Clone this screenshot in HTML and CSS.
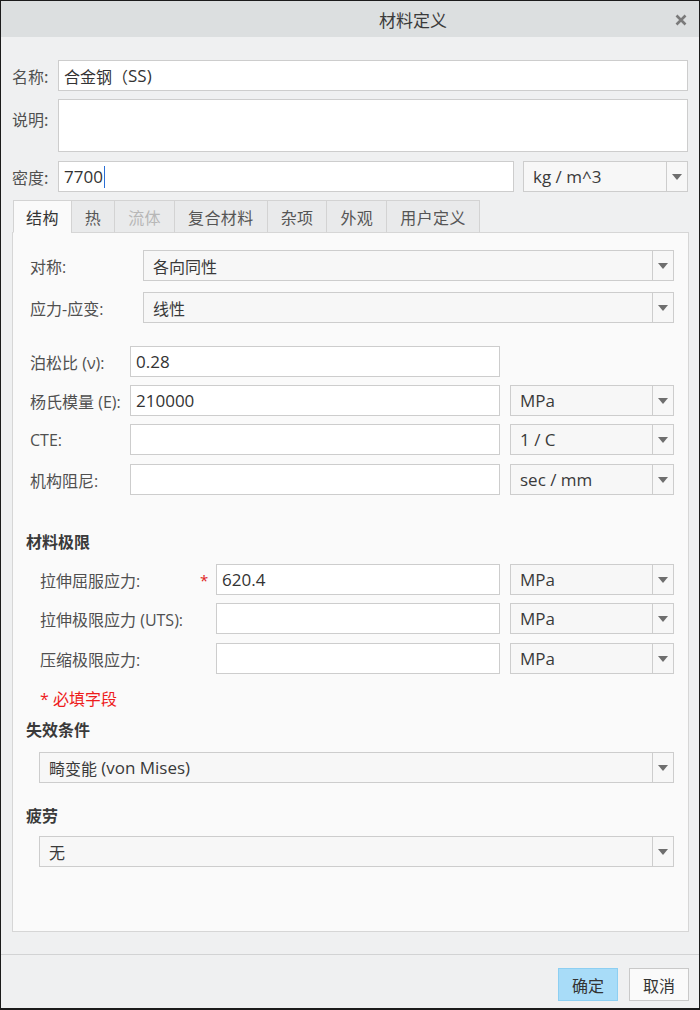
FILE: index.html
```html
<!DOCTYPE html>
<html lang="zh-CN">
<head>
<meta charset="utf-8">
<title>材料定义</title>
<link rel="stylesheet" href="styles.css">
</head>
<body>
<div class="window">
  <div class="titlebar">
    <span class="title">材料定义</span>
    <svg class="close" width="12" height="12" viewBox="0 0 12 12"><path d="M1.5 1.5 L10.5 10.5 M10.5 1.5 L1.5 10.5" stroke="#7a7a7a" stroke-width="2.6" stroke-linecap="butt"/></svg>
  </div>

  <div class="topform">
    <div class="frow r-name">
      <label class="flabel">名称:</label>
      <div class="input grow">合金钢（<span class="lat">SS)</span></div>
    </div>
    <div class="frow r-desc">
      <label class="flabel top">说明:</label>
      <div class="input grow tall"></div>
    </div>
    <div class="frow r-dens">
      <label class="flabel">密度:</label>
      <div class="input grow lat">7700<span class="caret"></span></div>
      <div class="select unit-top lat"><span class="sval">kg / m^3</span><span class="arrow"></span></div>
    </div>
  </div>

  <div class="tabs">
    <div class="tab active">结构</div>
    <div class="tab">热</div>
    <div class="tab disabled">流体</div>
    <div class="tab">复合材料</div>
    <div class="tab">杂项</div>
    <div class="tab">外观</div>
    <div class="tab">用户定义</div>
  </div>

  <div class="panel">
    <div class="prow first">
      <label class="plabel w113">对称:</label>
      <div class="select grow"><span class="sval">各向同性</span><span class="arrow"></span></div>
    </div>
    <div class="prow gap11">
      <label class="plabel w113">应力-应变:</label>
      <div class="select grow"><span class="sval">线性</span><span class="arrow"></span></div>
    </div>

    <div class="prow gap23">
      <label class="plabel w100">泊松比 (ν):</label>
      <div class="input w370 lat">0.28</div>
    </div>
    <div class="prow gap8">
      <label class="plabel w100">杨氏模量 (E):</label>
      <div class="input w370 lat">210000</div>
      <div class="select unit lat"><span class="sval">MPa</span><span class="arrow"></span></div>
    </div>
    <div class="prow gap8">
      <label class="plabel w100">CTE:</label>
      <div class="input w370"></div>
      <div class="select unit lat"><span class="sval">1 / C</span><span class="arrow"></span></div>
    </div>
    <div class="prow gap9">
      <label class="plabel w100">机构阻尼:</label>
      <div class="input w370"></div>
      <div class="select unit lat"><span class="sval">sec / mm</span><span class="arrow"></span></div>
    </div>

    <div class="heading h-limits">材料极限</div>
    <div class="prow lim gap12">
      <label class="plabel w160">拉伸屈服应力:</label>
      <span class="star">*</span>
      <div class="input w284 lat">620.4</div>
      <div class="select unit lat"><span class="sval">MPa</span><span class="arrow"></span></div>
    </div>
    <div class="prow lim gap8">
      <label class="plabel w160">拉伸极限应力 (UTS):</label>
      <span class="star"></span>
      <div class="input w284"></div>
      <div class="select unit lat"><span class="sval">MPa</span><span class="arrow"></span></div>
    </div>
    <div class="prow lim gap9">
      <label class="plabel w160">压缩极限应力:</label>
      <span class="star"></span>
      <div class="input w284"></div>
      <div class="select unit lat"><span class="sval">MPa</span><span class="arrow"></span></div>
    </div>
    <div class="required">* 必填字段</div>

    <div class="heading h-fail">失效条件</div>
    <div class="prow sub gap12">
      <div class="select grow"><span class="sval">畸变能 <span class="lat">(von Mises)</span></span><span class="arrow"></span></div>
    </div>
    <div class="heading h-fat">疲劳</div>
    <div class="prow sub gap10">
      <div class="select grow"><span class="sval">无</span><span class="arrow"></span></div>
    </div>
  </div>

  <div class="footer">
    <button class="btn primary">确定</button>
    <button class="btn">取消</button>
  </div>
</div>
</body>
</html>
```

FILE: styles.css
```css
* { box-sizing: border-box; }

html, body {
  margin: 0;
  padding: 0;
  background: #1b1b1b;
}

body {
  font-family: "Open Sans", "Noto Sans CJK SC", sans-serif;
  font-size: 16px;
  color: #3c3c3c;
}

.lat { font-size: 17px; }

.window {
  width: 700px;
  height: 1010px;
  border: 1px solid #1b1b1b;
  border-bottom-width: 2px;
  background: #eff0f1;
  display: flex;
  flex-direction: column;
}

.titlebar {
  height: 36px;
  background: #dcdfe0;
  display: flex;
  align-items: center;
  position: relative;
}

.title {
  flex: 1;
  text-align: center;
  padding-left: 126px;
  font-size: 17px;
  color: #3a3a3a;
  font-family: "Noto Sans CJK SC", sans-serif;
}

.close {
  position: absolute;
  right: 12px;
  top: 13px;
}

.topform {
  padding: 0 11px;
}

.frow {
  display: flex;
  align-items: center;
  height: 31px;
}

.r-name { margin-top: 23px; }
.r-desc { margin-top: 8px; height: 53px; align-items: flex-start; }
.r-dens { margin-top: 9px; }

.flabel {
  width: 46px;
  flex: none;
  color: #505050;
  font-family: "Noto Sans CJK SC", sans-serif;
}

.flabel.top { padding-top: 8px; }

.input {
  height: 31px;
  background: #ffffff;
  border: 1px solid #cdcdcd;
  padding: 0 5px;
  display: flex;
  align-items: center;
  color: #333;
  white-space: nowrap;
}

.input.tall { height: 53px; }

.grow { flex: 1; }

.caret {
  display: inline-block;
  width: 1px;
  height: 22px;
  background: #2a6fd6;
  margin-left: 1px;
}

.select {
  height: 31px;
  background: #f7f7f7;
  border: 1px solid #cdcdcd;
  display: flex;
  align-items: stretch;
  color: #3a3a3a;
  white-space: nowrap;
}

.sval {
  flex: 1;
  display: flex;
  align-items: center;
  padding-left: 9px;
  white-space: pre;
}

.arrow {
  width: 21px;
  flex: none;
  border-left: 1px solid #cdcdcd;
  position: relative;
}

.arrow::after {
  content: "";
  position: absolute;
  left: 5px;
  top: 12px;
  border-left: 5px solid transparent;
  border-right: 5px solid transparent;
  border-top: 6px solid #6e6e6e;
}

.unit-top {
  width: 165px;
  margin-left: 9px;
}

.tabs {
  display: flex;
  margin: 8px 0 0 12px;
  height: 33px;
  position: relative;
  z-index: 1;
}

.tab {
  height: 33px;
  padding: 1px 13px 0 13px;
  letter-spacing: 0.4px;
  border: 1px solid #d3d3d3;
  border-bottom: 1px solid #d6d6d6;
  margin-left: -1px;
  background: #e9eaeb;
  color: #555;
  display: flex;
  align-items: center;
  font-family: "Noto Sans CJK SC", sans-serif;
}

.tab:first-child {
  margin-left: 0;
  padding: 1px 12px 0 12px;
}

.tab.active {
  background: #fafafa;
  border-bottom-color: #fafafa;
  color: #333;
}

.tab.disabled { color: #b7b7b7; }

.panel {
  margin: -1px 10px 0 11px;
  height: 700px;
  background: #fafafa;
  border: 1px solid #d6d6d6;
  padding: 17px 14px 0 17px;
}

.prow {
  display: flex;
  align-items: center;
  height: 31px;
}

.gap8 { margin-top: 8px; }
.gap9 { margin-top: 9px; }
.gap10 { margin-top: 10px; }
.gap11 { margin-top: 11px; }
.gap12 { margin-top: 12px; }
.gap23 { margin-top: 23px; }

.plabel {
  flex: none;
  color: #505050;
  white-space: nowrap;
}

.w113 { width: 113px; }
.w100 { width: 100px; }
.w160 { width: 160px; }

.w370 { width: 370px; flex: none; }
.w284 { width: 284px; flex: none; }

.unit {
  width: 164px;
  margin-left: 10px;
}

.lim { padding-left: 10px; }

.star {
  width: 16px;
  flex: none;
  color: #e02020;
  font-size: 15px;
}

.sub { padding-left: 9px; }

.heading {
  height: 22px;
  line-height: 22px;
  font-weight: bold;
  color: #3a3a3a;
  margin-left: -4px;
  font-family: "Noto Sans CJK SC", sans-serif;
}

.h-limits { margin-top: 35px; }
.h-fail { margin-top: 8px; }
.h-fat { margin-top: 21px; }

.required {
  margin-top: 14px;
  padding-left: 10px;
  height: 22px;
  line-height: 22px;
  color: #ee1c1c;
}

.footer {
  margin-top: 22px;
  border-top: 1px solid #d2d3d4;
  display: flex;
  justify-content: flex-end;
  gap: 11px;
  padding: 13px 10px 0 0;
}

.btn {
  width: 60px;
  height: 33px;
  font-family: "Noto Sans CJK SC", sans-serif;
  font-size: 16px;
  color: #333;
  background: #fafafa;
  border: 1px solid #c9c9c9;
  padding: 0;
}

.btn.primary {
  background: #a8dcf8;
  border-color: #8dcff2;
}
```
